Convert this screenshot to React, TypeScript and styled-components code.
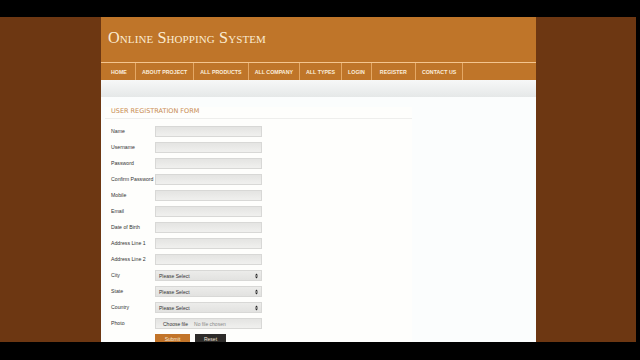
import React from 'react'
import styled, { createGlobalStyle } from 'styled-components'

const GlobalStyle = createGlobalStyle`
  html, body {
    margin: 0;
    padding: 0;
    background: #000;
  }
  * {
    box-sizing: border-box;
  }
`

const Screen = styled.div`
  width: 640px;
  height: 360px;
  background: #000;
  padding-top: 17px;
  overflow: hidden;
`

const Stage = styled.div`
  width: 636px;
  height: 325px;
  background: #6d3712;
  overflow: hidden;
`

const Wrapper = styled.div`
  margin-left: 101px;
  width: 435px;
  height: 100%;
  display: flex;
  flex-direction: column;
`

const Header = styled.div`
  height: 45px;
  flex-shrink: 0;
  background: #bf7529;
  padding: 12px 0 0 7px;
`

const SiteTitle = styled.h1`
  margin: 0;
  font-family: 'Liberation Serif', 'DejaVu Serif', serif;
  font-variant: small-caps;
  font-weight: normal;
  font-size: 16.2px;
  letter-spacing: 0.1px;
  color: #fbecd2;
`

const Nav = styled.ul`
  list-style: none;
  margin: 0;
  padding: 0 0 0 2px;
  height: 18px;
  flex-shrink: 0;
  display: flex;
  background: #bf7529;
  border-top: 1px solid #f4c58e;
`

const NavItem = styled.li<{ $pad: number }>`
  display: flex;
  align-items: center;
  padding: 0 ${({ $pad }) => $pad}px;
  border-right: 1px solid #e4a866;
  font-family: 'Liberation Sans', Arial, sans-serif;
  font-size: 5.3px;
  font-weight: bold;
  color: #fbeedd;
  white-space: nowrap;
`

const Band = styled.div`
  height: 17px;
  flex-shrink: 0;
  background: linear-gradient(#f7f8f8, #e5e8e8);
`

const Content = styled.div`
  flex: 1;
  background: #fbfdfd;
  padding: 10px 0 0 4px;
`

const FormArea = styled.div`
  width: 307px;
  background: #fefefc;
  height: 100%;
`

const FormTitle = styled.h2`
  margin: 0;
  padding: 0 0 3px 6px;
  font-family: 'DejaVu Sans', 'Open Sans', sans-serif;
  font-weight: normal;
  font-size: 6.5px;
  color: #c78a4f;
  border-bottom: 1px solid #eeeeec;
`

const Rows = styled.div`
  padding: 7px 0 0 6px;
  display: flex;
  flex-direction: column;
  gap: 5px;
`

const Row = styled.div`
  display: flex;
  align-items: center;
  height: 11px;
`

const Label = styled.span`
  width: 44px;
  font-family: 'Liberation Sans', Arial, sans-serif;
  font-size: 5.2px;
  color: #333;
  white-space: nowrap;
  margin-top: -2px;
`

const Field = styled.div`
  width: 107px;
  height: 11px;
  border: 1px solid #d8d8d6;
  background: linear-gradient(#e4e4e2, #f0f0ee);
  display: flex;
  align-items: center;
  padding: 0 3px;
  font-family: 'Liberation Sans', Arial, sans-serif;
  font-size: 5px;
  color: #333;
`

const SelectField = styled(Field)`
  justify-content: space-between;
  background: linear-gradient(#ececea, #e2e2e0);
`

const FileButton = styled.span`
  padding: 0 4px;
  color: #333;
`

const NoFile = styled.span`
  color: #888;
  margin-left: 2px;
`

const Buttons = styled.div`
  display: flex;
  gap: 5px;
  margin: 0 0 0 44px;
`

const Button = styled.div<{ $dark?: boolean }>`
  width: ${({ $dark }) => ($dark ? 31 : 35)}px;
  height: 10px;
  display: flex;
  align-items: center;
  justify-content: center;
  background: ${({ $dark }) => ($dark ? '#2d2b29' : '#c27429')};
  font-family: 'Liberation Sans', Arial, sans-serif;
  font-size: 5px;
  line-height: 6px;
  color: #f5e9dc;
`

const SelectArrows = () => (
  <svg width="3" height="6" viewBox="0 0 3 6">
    <path d="M0 2.4 L1.5 0.4 L3 2.4 Z M0 3.6 L1.5 5.6 L3 3.6 Z" fill="#222" />
  </svg>
)

const menu: [string, number][] = [
  ['HOME', 8],
  ['ABOUT PROJECT', 6],
  ['ALL PRODUCTS', 6],
  ['ALL COMPANY', 6],
  ['ALL TYPES', 6],
  ['LOGIN', 6],
  ['REGISTER', 8],
  ['CONTACT US', 6],
]

const textFields = [
  'Name',
  'Username',
  'Password',
  'Confirm Password',
  'Mobile',
  'Email',
  'Date of Birth',
  'Address Line 1',
  'Address Line 2',
]

const selects = ['City', 'State', 'Country']

const App: React.FC = () => {
  return (
    <>
      <GlobalStyle />
      <Screen>
        <Stage>
          <Wrapper>
            <Header>
              <SiteTitle>Online Shopping System</SiteTitle>
            </Header>
            <Nav>
              {menu.map(([item, pad]) => (
                <NavItem key={item} $pad={pad}>
                  {item}
                </NavItem>
              ))}
            </Nav>
            <Band />
            <Content>
              <FormArea>
                <FormTitle>USER REGISTRATION FORM</FormTitle>
                <Rows>
                  {textFields.map((name) => (
                    <Row key={name}>
                      <Label>{name}</Label>
                      <Field />
                    </Row>
                  ))}
                  {selects.map((name) => (
                    <Row key={name}>
                      <Label>{name}</Label>
                      <SelectField>
                        Please Select
                        <SelectArrows />
                      </SelectField>
                    </Row>
                  ))}
                  <Row>
                    <Label>Photo</Label>
                    <Field>
                      <FileButton>Choose file</FileButton>
                      <NoFile>No file chosen</NoFile>
                    </Field>
                  </Row>
                  <Buttons>
                    <Button>Submit</Button>
                    <Button $dark>Reset</Button>
                  </Buttons>
                </Rows>
              </FormArea>
            </Content>
          </Wrapper>
        </Stage>
      </Screen>
    </>
  )
}

export default App
